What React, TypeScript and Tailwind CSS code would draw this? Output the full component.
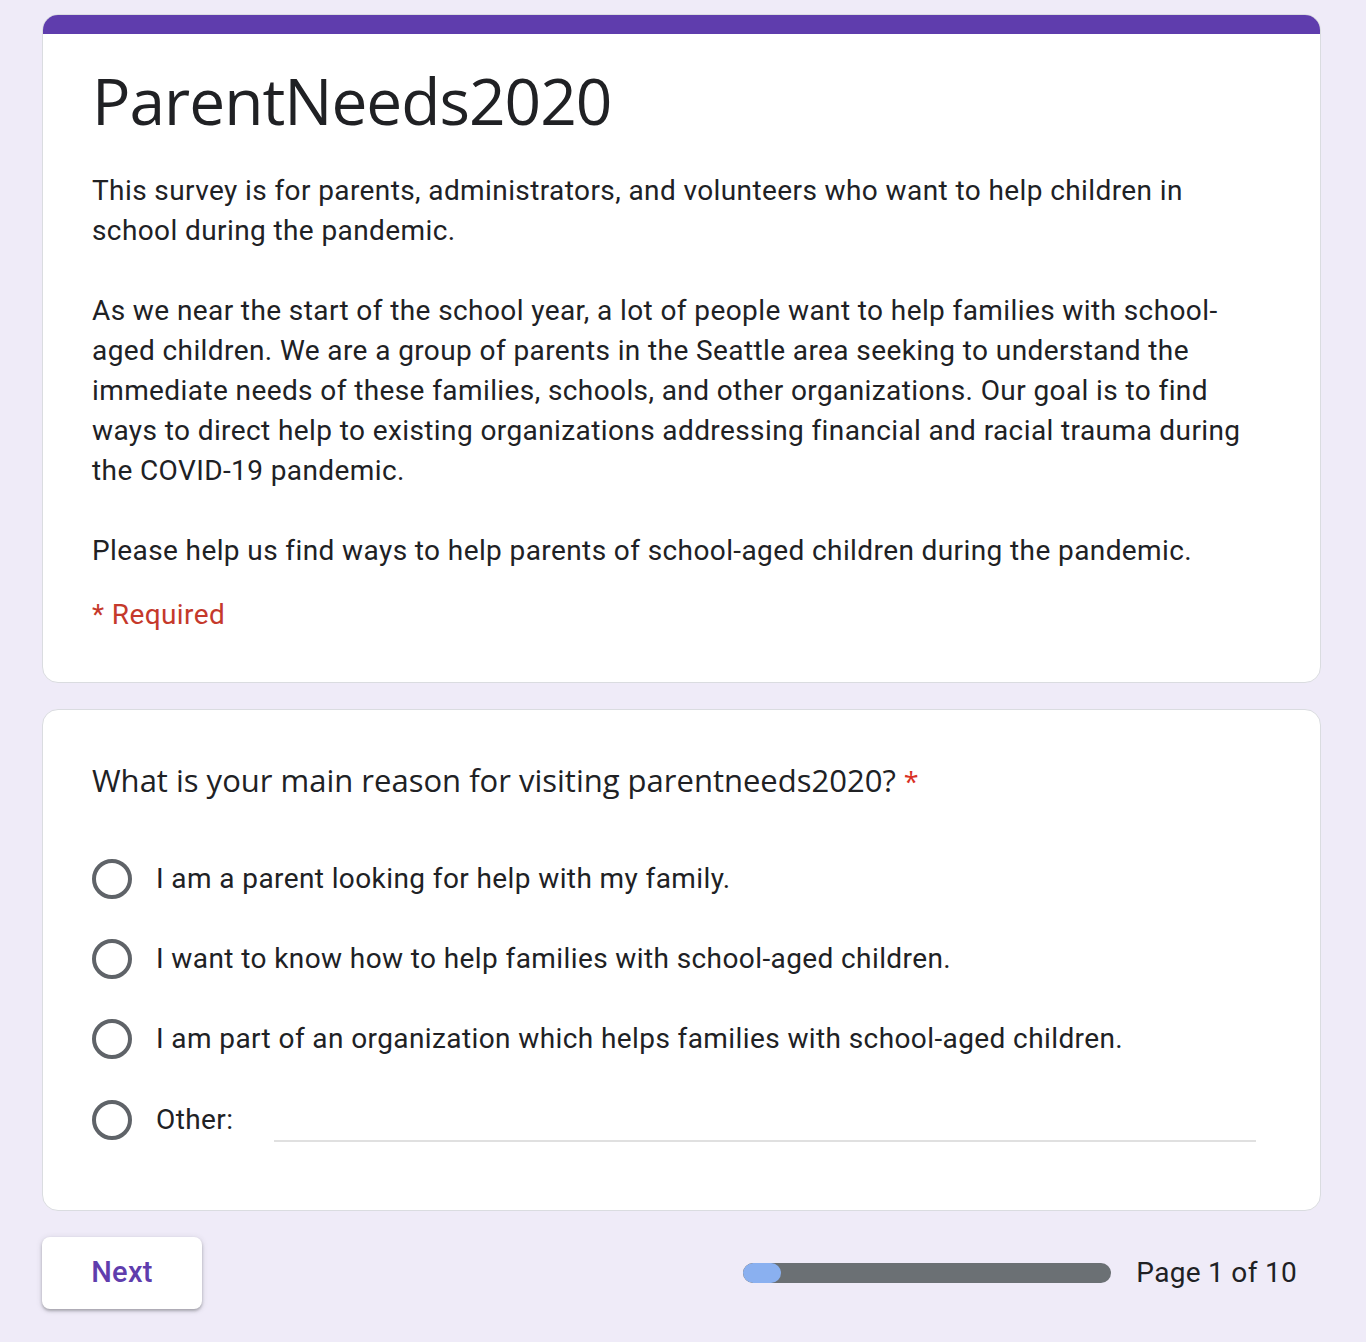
import React from 'react';

const options = [
  'I am a parent looking for help with my family.',
  'I want to know how to help families with school-aged children.',
  'I am part of an organization which helps families with school-aged children.',
];

const Radio: React.FC = () => (
  <span className="block h-[40px] w-[40px] shrink-0 rounded-full border-[4px] border-[#5f6368]"></span>
);

const App: React.FC = () => {
  return (
    <div className="min-h-[1342px] bg-[#efebf8] pt-[14px] pb-[34px] text-[#202124]" style={{ fontFamily: 'Roboto, "Liberation Sans", sans-serif' }}>
      <div className="ml-[42px] w-[1279px]">
        {/* Header card */}
        <div className="overflow-hidden rounded-[16px] border border-[#dadce0] bg-white">
          <div className="-mx-px -mt-px h-[20px] bg-[#5f3dad]"></div>
          <div className="pl-[49px] pr-[60px] pt-[27px] pb-[47px]">
            <h1 className="text-[64px] leading-[80px] tracking-[-1px]" style={{ fontFamily: '"Open Sans", Roboto, sans-serif' }}>
              ParentNeeds2020
            </h1>
            <div className="mt-[30px] text-[28px] leading-[40px] tracking-[0.4px]">
              <p>
                This survey is for parents, administrators, and volunteers who want to help children in school during the pandemic.
              </p>
              <p className="mt-[40px]">
                As we near the start of the school year, a lot of people want to help families with school-aged children. We are a group of parents in the Seattle area seeking to understand the immediate needs of these families, schools, and other organizations. Our goal is to find ways to direct help to existing organizations addressing financial and racial trauma during the COVID-19 pandemic.
              </p>
              <p className="mt-[40px]">
                Please help us find ways to help parents of school-aged children during the pandemic.
              </p>
            </div>
            <p className="mt-[24px] text-[28px] leading-[40px] tracking-[0.4px] text-[#c5392b]">* Required</p>
          </div>
        </div>

        {/* Question card */}
        <div className="mt-[26px] rounded-[16px] border border-[#dadce0] bg-white px-[49px] pt-[46px] pb-[49px]">
          <h2 className="h-[48px] text-[31px] leading-[48px]" style={{ fontFamily: '"Open Sans", Roboto, sans-serif' }}>
            What is your main reason for visiting parentneeds2020? <span className="text-[27px] leading-none text-[#d93025]">*</span>
          </h2>
          <div className="mt-[35px]">
            {options.map((o) => (
              <div key={o} className="flex h-[80px] items-center gap-[24px]">
                <Radio />
                <span className="text-[28px] leading-[40px] tracking-[0.4px]">{o}</span>
              </div>
            ))}
            <div className="flex h-[82px] items-center gap-[24px]">
              <Radio />
              <span className="text-[28px] leading-[40px] tracking-[0.4px]">Other:</span>
              <div className="ml-[17px] mr-[15px] mt-[42px] h-[2px] flex-1 bg-[#e0e0e0]"></div>
            </div>
          </div>
        </div>

        {/* Footer */}
        <div className="mt-[26px] flex items-center justify-between pr-[24px]">
          <button className="h-[72px] w-[160px] rounded-[8px] bg-white text-[29px] font-medium tracking-[0.3px] text-[#5f3dad] shadow-[0_2px_3px_rgba(60,64,67,0.35),0_1px_6px_rgba(60,64,67,0.15)]">
            Next
          </button>
          <div className="flex items-center gap-[25px]">
            <div className="h-[20px] w-[368px] overflow-hidden rounded-full bg-[#6b7074]">
              <div className="h-full w-[38px] rounded-full bg-[#8ab0f0]"></div>
            </div>
            <span className="text-[28px] leading-[40px] tracking-[0.3px]">Page 1 of 10</span>
          </div>
        </div>
      </div>
    </div>
  );
};

export default App;
